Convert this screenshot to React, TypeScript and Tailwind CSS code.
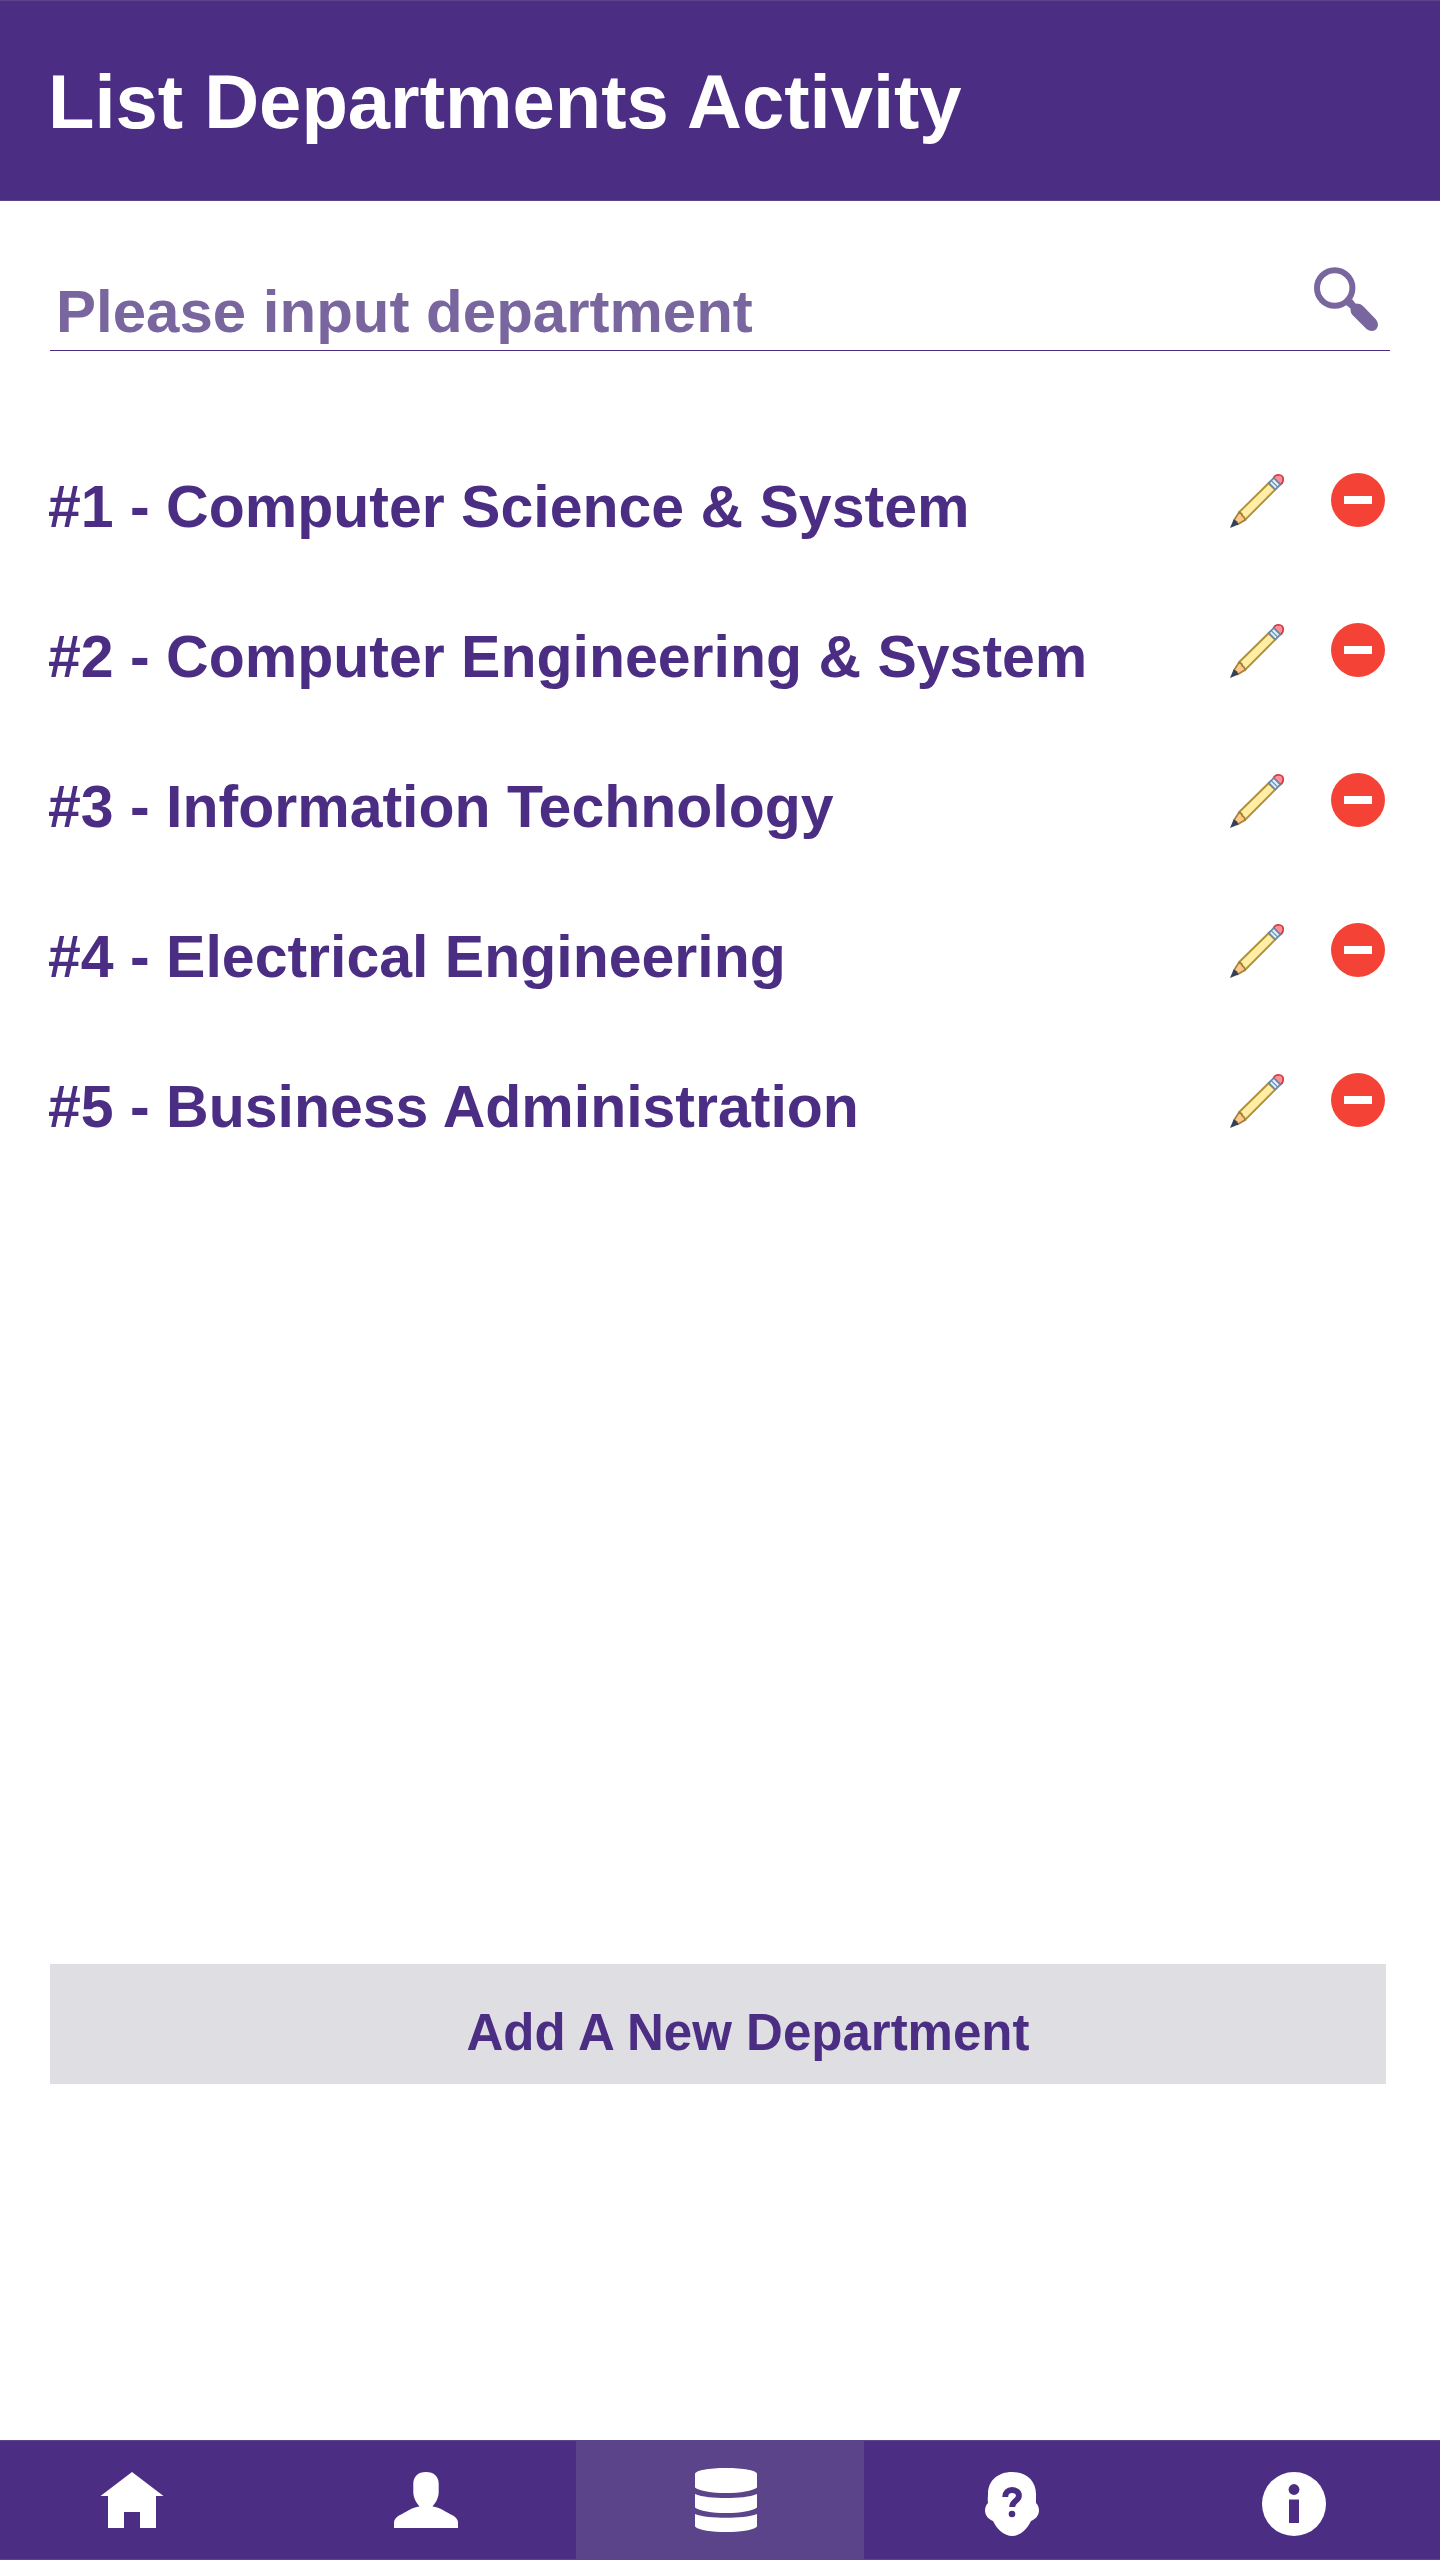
import React, { useState } from 'react';

function SearchIcon() {
  return (
    <svg viewBox="0 0 64 64" className="size-16" aria-hidden="true">
      <circle cx="20.7" cy="21" r="17.7" fill="none" stroke="#7a669f" strokeWidth="6" />
      <path d="M32 38 L38 32 L41.500 36.500 L46 37 Q48 38 50 40 L62 52.500 Q64 55 64 58 Q63.500 63.500 58 64 Q55 64 52.500 62 L38.500 48 Q36.500 45.500 36.500 43 V41.500 Z" fill="#7a669f" />
    </svg>
  );
}

function PencilIcon() {
  return (
    <svg viewBox="0 0 54 54" className="size-[54px]" aria-hidden="true">
      <path d="M43.500 4 C44.500 1.800 46.500 0.800 48.500 0.800 C51.500 1 53.300 3 53.200 5.500 C53.200 8 52 9.800 50.200 10.800 Z" fill="#ff8f95" stroke="#c93c48" strokeWidth="1.600" />
      <path d="M9 38.300 L38.600 9.200 L45.200 15.600 L15 46 Z" fill="#ffeea3" stroke="#b2903a" strokeWidth="1.900" />
      <path d="M38.700 9 L43.800 3.900 L50.400 10.500 L45.300 15.600 Z" fill="#dfeefc" stroke="#6c87a5" strokeWidth="1.800" />
      <path d="M41.200 6.600 L47.800 13.200" stroke="#6c87a5" strokeWidth="1.200" />
      <path d="M3.800 46.500 L9 38.400 Q12.500 39.600 12.300 42 Q14.600 42.400 15 45.900 L7.500 50.400 Z" fill="#ffc987" stroke="#a1803a" strokeWidth="1.700" strokeLinejoin="round" />
      <path d="M0 54 L3.600 45.500 Q7.500 46.500 8.400 50.500 Z" fill="#33415a" />
    </svg>
  );
}

function RemoveIcon() {
  return (
    <svg viewBox="0 0 54 54" className="size-[54px]" aria-hidden="true">
      <circle cx="27" cy="27" r="27" fill="#f44336" />
      <path d="M13 23 H41 V31 H13 Z" fill="#fff" />
    </svg>
  );
}

function HomeIcon() {
  return (
    <svg viewBox="0 0 64 64" className="size-16" fill="#fff" aria-hidden="true">
      <path d="M32 4 L63.500 28 H56 V60 H40 V44 H24 V60 H8 V28 H0.500 Z" />
    </svg>
  );
}

function PersonIcon() {
  return (
    <svg viewBox="0 0 64 64" className="size-16" fill="#fff" aria-hidden="true">
      <path d="M32 4 C40 4 44.700 8.500 44.700 16 V24 C44.700 30 41.500 35 38.500 38.500 C46 39.500 52 44 59 47.500 C62 49.500 64 51.500 64 54.500 V60 H0 V54.500 C0 51.500 2 49.500 5 47.500 C12 44 18 39.500 25.500 38.500 C22.500 35 19.300 30 19.300 24 V16 C19.300 8.500 24 4 32 4 Z" />
    </svg>
  );
}

function DatabaseIcon() {
  return (
    <svg viewBox="0 0 64 64" className="size-16" fill="#fff" aria-hidden="true">
      <path d="M1 6 C1 2.500 15 0 32 0 C49 0 63 2.500 63 6 V19.500 C59 23 46 25 32 25 C18 25 5 23 1 19.500 Z" />
      <path d="M1 26 C8 29 20 30 32 30 C44 30 56 29 63 26 V39.500 C59 43 46 45 32 45 C18 45 5 43 1 39.500 Z" />
      <path d="M1 46 C8 48.800 20 49.800 32 49.800 C44 49.800 56 48.800 63 46 V58.500 C59 62.500 46 64 32 64 C18 64 5 62.500 1 58.500 Z" />
    </svg>
  );
}

function HelpIcon() {
  return (
    <svg viewBox="0 0 64 64" className="size-16" aria-hidden="true">
      <path d="M32 0 C46 0 56 8.500 56 22 V31 C58 33 59 35.500 59 39 C58.500 44 55.500 47 51 49 C47 57.500 39.500 64 32 64 C24.500 64 17 57.500 13 49 C8.500 47 5.500 44 5 39 C5 35.500 6 33 8 31 C7.500 28 8 24 8 22 C8 8.500 18 0 32 0 Z" fill="#fff" />
      <path d="M25.200 25 C25.200 20.500 28 18 32 18 C36 18 38.900 20.300 38.900 23.700 C38.900 29 32.200 28.500 32.200 35" fill="none" stroke="#4b2e83" strokeWidth="5.900" />
      <circle cx="32" cy="42" r="3.300" fill="#4b2e83" />
    </svg>
  );
}

function InfoIcon() {
  return (
    <svg viewBox="0 0 64 64" className="size-16" aria-hidden="true">
      <circle cx="32" cy="32" r="32" fill="#fff" />
      <circle cx="32" cy="17.500" r="5.400" fill="#4b2e83" />
      <path d="M27 27.500 H37 V51 H27 Z" fill="#4b2e83" />
    </svg>
  );
}

const departments = [
  'Computer Science & System',
  'Computer Engineering & System',
  'Information Technology',
  'Electrical Engineering',
  'Business Administration',
];

const tabs = [
  { label: 'Home', icon: <HomeIcon />, style: 'pr-6' },
  { label: 'Profile', icon: <PersonIcon />, style: 'pr-3' },
  { label: 'Departments', icon: <DatabaseIcon />, style: 'pl-3 bg-[#5b4489]' },
  { label: 'Help', icon: <HelpIcon />, style: 'pl-2 pt-2' },
  { label: 'Info', icon: <InfoIcon />, style: 'pr-1 pt-2' },
];

export default function App() {
  const [query, setQuery] = useState('');

  return (
    <div className="flex min-h-screen flex-col bg-white font-bold text-[#4b2e83] [font-family:'Arial_Rounded_MT_Bold','Liberation_Sans',Arial,sans-serif]">
      <header className="border-y border-[#5b4489] bg-[#4b2e83] px-12 pt-[58px] pb-[55px]">
        <h1 className="text-[76px] leading-[86px] text-white">List Departments Activity</h1>
      </header>

      <main className="flex flex-1 flex-col pr-[50px] pl-12">
        <form
          role="search"
          className="mt-[60px] ml-0.5 flex h-[90px] items-start border-b border-[#4b2e83] pr-3"
          onSubmit={(e) => e.preventDefault()}
        >
          <input
            type="text"
            aria-label="Department"
            placeholder="Please input department"
            value={query}
            onChange={(e) => setQuery(e.target.value)}
            className="h-[84px] min-w-0 flex-1 pt-4 pl-[6px] text-[60px] leading-[68px] outline-none placeholder:text-[#7a669f] placeholder:opacity-100"
          />
          <button type="submit" aria-label="Search" className="pt-[6px]">
            <SearchIcon />
          </button>
        </form>

        <ul className="mt-[74px]">
          {departments.map((name, i) => (
            <li key={name} className="flex h-[150px] items-center">
              <span className="min-w-0 flex-1 pt-[14px] text-[59px] leading-[68px]">
                #{i + 1} - {name}
              </span>
              <span className="flex items-center gap-[47px] pr-[5px]">
                <button type="button" aria-label={`Edit ${name}`} className="pt-0.5">
                  <PencilIcon />
                </button>
                <button type="button" aria-label={`Remove ${name}`}>
                  <RemoveIcon />
                </button>
              </span>
            </li>
          ))}
        </ul>

        <button
          type="button"
          className="mt-auto mr-1 mb-[356px] ml-0.5 h-[120px] bg-[#dfdee3] pt-[18px] pl-[60px] text-[51px] leading-[60px]"
        >
          Add A New Department
        </button>
      </main>

      <nav className="grid h-[120px] grid-cols-5 border-y border-[#5b4489] bg-[#4b2e83]">
        {tabs.map((tab) => (
          <a key={tab.label} href="#" aria-label={tab.label} className={`flex items-center justify-center ${tab.style}`}>
            {tab.icon}
          </a>
        ))}
      </nav>
    </div>
  );
}
